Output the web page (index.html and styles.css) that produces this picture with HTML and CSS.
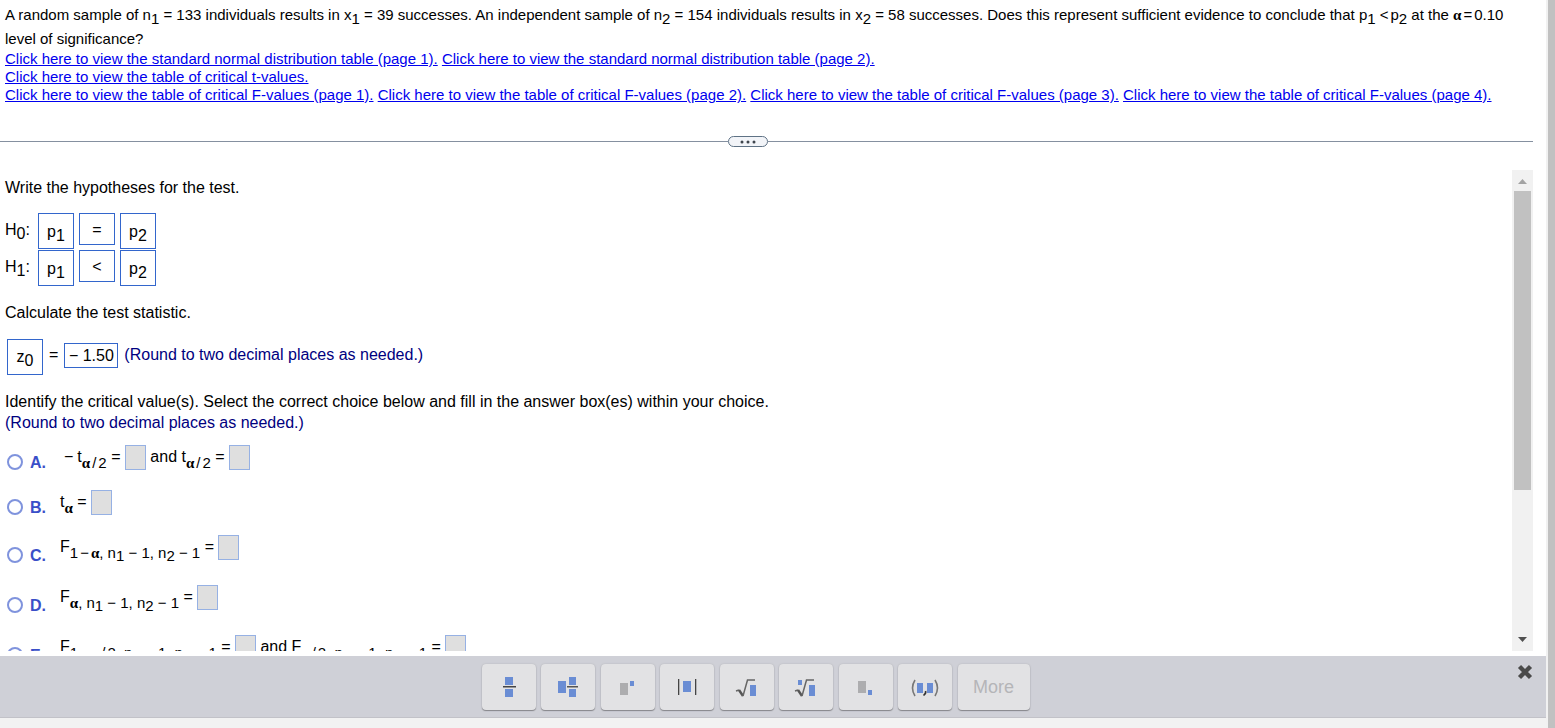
FILE: index.html
```
<!DOCTYPE html>
<html lang="en">
<head>
    <meta charset="UTF-8">
    <meta name="viewport" content="width=device-width, initial-scale=1.0">
    <title>Hypothesis test</title>
    <link rel="stylesheet" href="styles.css">
</head>
<body>
    <div class="page">
        <section class="prompt">
            <p class="problem">A random sample of n<sub>1</sub> = 133 individuals results in x<sub>1</sub> = 39 successes. An independent sample of n<sub>2</sub> = 154 individuals results in x<sub>2</sub> = 58 successes. Does this represent sufficient evidence to conclude that p<sub>1</sub> &lt;<span class="thin"></span>p<sub>2</sub> at the <i class="greek">α</i><span class="thin"></span>=<span class="thin"></span>0.10 level of significance?</p>
            <p class="links"><a href="#">Click here to view the standard normal distribution table (page 1).</a> <a href="#">Click here to view the standard normal distribution table (page 2).</a></p>
            <p class="links"><a href="#">Click here to view the table of critical t-values.</a></p>
            <p class="links"><a href="#">Click here to view the table of critical F-values (page 1).</a> <a href="#">Click here to view the table of critical F-values (page 2).</a> <a href="#">Click here to view the table of critical F-values (page 3).</a> <a href="#">Click here to view the table of critical F-values (page 4).</a></p>
        </section>

        <div class="divider">
            <button type="button" class="divider-handle" aria-label="Resize">
                <svg width="16" height="4" viewBox="0 0 16 4" fill="#3f454d"><circle cx="2" cy="2" r="1.5"/><circle cx="8" cy="2" r="1.5"/><circle cx="14" cy="2" r="1.5"/></svg>
            </button>
        </div>

        <div class="work">
            <main class="question">
                <p>Write the hypotheses for the test.</p>

                <div class="hypotheses">
                    <div class="hypothesis">
                        <span class="hyp-name">H<sub>0</sub>:</span>
                        <button type="button" class="answer">p<sub>1</sub></button>
                        <button type="button" class="answer answer-sign">=</button>
                        <button type="button" class="answer">p<sub>2</sub></button>
                    </div>
                    <div class="hypothesis">
                        <span class="hyp-name">H<sub>1</sub>:</span>
                        <button type="button" class="answer">p<sub>1</sub></button>
                        <button type="button" class="answer answer-sign">&lt;</button>
                        <button type="button" class="answer">p<sub>2</sub></button>
                    </div>
                </div>

                <p>Calculate the test statistic.</p>

                <div class="statistic">
                    <button type="button" class="answer">z<sub>0</sub></button>
                    <label for="stat">=</label>
                    <input type="text" id="stat" class="stat-value" value="− 1.50">
                    <span class="hint">(Round to two decimal places as needed.)</span>
                </div>

                <p>Identify the critical value(s). Select the correct choice below and fill in the answer box(es) within your choice.<br><span class="hint">(Round to two decimal places as needed.)</span></p>

                <div class="choices">
                    <div class="choice">
                        <input type="radio" name="choice" id="choice-a">
                        <label for="choice-a">A.</label>
                        <div class="formula"><span class="thin"></span><span class="thin"></span>−<span class="thin"></span><span class="thin"></span>t<sub><i class="greek">α</i><span class="thin"></span>/<span class="thin"></span>2</sub> = <input type="text" class="blank" aria-label="Lower critical t"> and t<sub><i class="greek">α</i><span class="thin"></span>/<span class="thin"></span>2</sub> = <input type="text" class="blank" aria-label="Upper critical t"></div>
                    </div>
                    <div class="choice">
                        <input type="radio" name="choice" id="choice-b">
                        <label for="choice-b">B.</label>
                        <div class="formula">t<sub><i class="greek">α</i></sub> = <input type="text" class="blank" aria-label="Critical t"></div>
                    </div>
                    <div class="choice choice-deep">
                        <input type="radio" name="choice" id="choice-c">
                        <label for="choice-c">C.</label>
                        <div class="formula">F<sub>1<span class="thin"></span>−<span class="thin"></span><i class="greek">α</i>, n<sub>1</sub> − 1, n<sub>2</sub> − 1</sub> = <input type="text" class="blank" aria-label="Lower critical F"></div>
                    </div>
                    <div class="choice choice-deep">
                        <input type="radio" name="choice" id="choice-d">
                        <label for="choice-d">D.</label>
                        <div class="formula">F<sub><i class="greek">α</i>, n<sub>1</sub> − 1, n<sub>2</sub> − 1</sub> = <input type="text" class="blank" aria-label="Upper critical F"></div>
                    </div>
                    <div class="choice choice-deep">
                        <input type="radio" name="choice" id="choice-e">
                        <label for="choice-e">E.</label>
                        <div class="formula">F<sub>1<span class="thin"></span>−<span class="thin"></span><i class="greek">α</i><span class="thin"></span>/<span class="thin"></span>2, n<sub>1</sub> − 1, n<sub>2</sub> − 1</sub> = <input type="text" class="blank" aria-label="Lower two-tailed F"> and F<sub><i class="greek">α</i><span class="thin"></span>/<span class="thin"></span>2, n<sub>1</sub> − 1, n<sub>2</sub> − 1</sub> = <input type="text" class="blank" aria-label="Upper two-tailed F"></div>
                    </div>
                </div>
            </main>

            <div class="scrollbar">
                <svg width="9" height="5" viewBox="0 0 9 5"><path d="M0 5L4.5 0L9 5Z" fill="#a3a3a3"/></svg>
                <div class="scrollbar-track"><div class="scrollbar-thumb"></div></div>
                <svg width="9" height="5" viewBox="0 0 9 5"><path d="M0 0L4.5 5L9 0Z" fill="#505050"/></svg>
            </div>
        </div>

        <div class="palette">
            <div class="keys-area">
                <div class="keys">
                    <button type="button" class="key" aria-label="Fraction">
                        <svg width="32" height="28" viewBox="0 0 32 28"><path d="M12 4h8v8h-8zM12 16h8v8h-8z" fill="#6a8dd4"/><path d="M10 13h13v1.5H10z" fill="#444"/></svg>
                    </button>
                    <button type="button" class="key" aria-label="Mixed number">
                        <svg width="32" height="28" viewBox="0 0 32 28"><path d="M6 8h8v12H6zM17 4h7v8h-7zM17 16h7v8h-7z" fill="#6a8dd4"/><path d="M15 13h11v1.5H15z" fill="#555"/></svg>
                    </button>
                    <button type="button" class="key" aria-label="Exponent">
                        <svg width="32" height="28" viewBox="0 0 32 28"><path d="M8 10h8v12H8z" fill="#adadaf"/><path d="M18 8h4v5h-4z" fill="#6a8dd4"/></svg>
                    </button>
                    <button type="button" class="key" aria-label="Absolute value">
                        <svg width="32" height="28" viewBox="0 0 32 28"><path d="M12 8h8v11h-8z" fill="#6a8dd4"/><path d="M7 6h1.3v16H7zM24 6h1.3v16H24z" fill="#444"/></svg>
                    </button>
                    <button type="button" class="key" aria-label="Square root">
                        <svg width="32" height="28" viewBox="0 0 32 28"><path d="M19 12h6v11h-6z" fill="#6a8dd4"/><path d="M5 18l3-1" stroke="#666" stroke-width="1.4" fill="none"/><path d="M8 17l4 6" stroke="#555" stroke-width="2.4" fill="none"/><path d="M12 23l4.5-16H24" stroke="#666" stroke-width="1.5" fill="none"/></svg>
                    </button>
                    <button type="button" class="key" aria-label="Nth root">
                        <svg width="32" height="28" viewBox="0 0 32 28"><path d="M19 12h6v11h-6zM8 7h4v5H8z" fill="#6a8dd4"/><path d="M5 18l3-1" stroke="#666" stroke-width="1.4" fill="none"/><path d="M8 17l4 6" stroke="#555" stroke-width="2.4" fill="none"/><path d="M12 23l4.5-16H24" stroke="#666" stroke-width="1.5" fill="none"/></svg>
                    </button>
                    <button type="button" class="key" aria-label="Subscript">
                        <svg width="32" height="28" viewBox="0 0 32 28"><path d="M8 8h8v12H8z" fill="#adadaf"/><path d="M18 17h4v5h-4z" fill="#6a8dd4"/></svg>
                    </button>
                    <button type="button" class="key" aria-label="Ordered pair">
                        <svg width="32" height="28" viewBox="0 0 32 28"><path d="M8 10h6v10H8zM18 10h6v10h-6z" fill="#6a8dd4"/><path d="M6 7q-5 8 0 16M26 7q5 8 0 16" stroke="#777" stroke-width="1.6" fill="none"/><path d="M16.5 18q1 2-2 4.500" stroke="#333" stroke-width="1.6" fill="none"/></svg>
                    </button>
                    <button type="button" class="key key-more" disabled>More</button>
                </div>
            </div>
            <button type="button" class="close" aria-label="Close">
                <svg width="16" height="16" viewBox="0 0 16 16"><path d="M2.500 2.500l11 11M13.500 2.500l-11 11" stroke="#4a4a4a" stroke-width="4.400"/></svg>
            </button>
        </div>
        <div class="footer"></div>
    </div>
    <div class="page-scroll"></div>
</body>
</html>
```
FILE: styles.css
```
* {
    box-sizing: border-box;
    margin: 0;
    padding: 0;
}
body {
    display: flex;
    height: 100vh;
    overflow: hidden;
    font-family: "Liberation Sans", Arial, sans-serif;
    font-size: 16px;
    line-height: 21px;
    color: #000;
    background: #fff;
}
button,
input {
    font: inherit;
    color: inherit;
}
.page {
    flex: 1;
    min-width: 0;
    display: flex;
    flex-direction: column;
}
.page-scroll {
    width: 9px;
    background: #c1c1c1;
    border-left: 2px solid #f1f1f1;
}

/* math */
sub {
    font-size: 16px;
    line-height: 0;
    vertical-align: -4px;
}
.greek {
    font-family: "Liberation Serif", serif;
    font-style: normal;
    font-weight: bold;
}
.thin {
    display: inline-block;
    width: 2px;
}

/* problem text */
.prompt {
    padding: 3px 20px 0 5px;
    font-size: 15px;
}
.prompt sub {
    font-size: 15px;
}
.problem {
    line-height: 23px;
}
.links {
    line-height: 18px;
}
.links a {
    color: #0000ee;
}

.divider {
    display: flex;
    align-items: center;
    margin: 32px 13px 0 0;
}
.divider::before,
.divider::after {
    content: "";
    flex: 20;
    height: 1px;
    background: #8590a0;
}
.divider::after {
    flex: 21;
}
.divider-handle {
    display: flex;
    align-items: center;
    justify-content: center;
    width: 40px;
    height: 11px;
    border: 1px solid #5f7285;
    border-radius: 6px;
    background: #f2f4f8;
}

/* question */
.work {
    flex: 1;
    min-height: 0;
    display: flex;
    margin: 23px 13px 5px 0;
    overflow: hidden;
}
.question {
    flex: 1;
    padding: 7px 5px 0;
}
.hint {
    color: #000080;
}
.answer {
    width: 36px;
    height: 36px;
    border: 1px solid #3366cc;
    background: #fff;
}
.answer-sign {
    height: 32px;
}
.hypotheses {
    display: flex;
    flex-direction: column;
    gap: 1px;
    padding: 15px 0 16px;
}
.hypothesis {
    display: flex;
    align-items: flex-start;
    gap: 5px;
}
.hyp-name {
    width: 28px;
    padding-top: 6px;
}
.statistic {
    display: flex;
    align-items: flex-start;
    gap: 6px;
    padding: 16px 2px;
    line-height: 32px;
}
.stat-value {
    width: 54px;
    height: 25px;
    margin-top: 4px;
    border: 1px solid #3366cc;
    text-align: center;
}
.choices {
    padding-top: 11px;
}
.choice {
    display: flex;
    align-items: center;
    min-height: 36px;
    margin-bottom: 9px;
    padding-left: 2px;
}
.choice-deep {
    min-height: 42px;
    margin-bottom: 8px;
}
.choice label {
    width: 30px;
    margin-left: 7px;
    font-weight: bold;
    color: #3a4fc8;
}
.choice input[type="radio"] {
    appearance: none;
    width: 16px;
    height: 16px;
    border: 2px solid #7f93dd;
    border-radius: 50%;
    background: #fff;
}
.formula {
    align-self: flex-start;
    line-height: 25px;
    white-space: nowrap;
}
.formula sub {
    font-size: 15px;
    vertical-align: -6px;
}
.formula sub sub {
    vertical-align: -3px;
}
.blank {
    width: 21px;
    height: 25px;
    border: 1px solid #96b1e4;
    background: #dfdfdf;
    vertical-align: middle;
}

.scrollbar {
    display: flex;
    flex-direction: column;
    align-items: center;
    width: 21px;
    padding: 9px 0;
    background: #f1f1f1;
}
.scrollbar-track {
    flex: 1;
    width: 17px;
    padding: 7px 0;
}
.scrollbar-thumb {
    height: 68%;
    background: #c1c1c1;
}

/* math palette */
.palette {
    display: flex;
    align-items: flex-start;
    padding: 8px 13px 7px 0;
    background: #cfd0d7;
    border-bottom: 1px solid #c2c2c8;
}
.keys-area {
    flex: 1;
    display: flex;
    justify-content: center;
}
.keys {
    display: flex;
    justify-content: space-between;
    width: 548px;
}
.key {
    display: flex;
    align-items: center;
    justify-content: center;
    width: 54px;
    height: 46px;
    border: 0;
    border-radius: 4px;
    background: #e2e2e4;
    box-shadow: 0 1px 1px #85858a, 0 0 2px #b4b4ba;
}
.key-more {
    width: 72px;
    font-size: 18px;
    color: #b5b5b8;
}
.close {
    display: flex;
    padding-left: 6px;
    border: 0;
    background: none;
}
.footer {
    height: 10px;
    background: #f2f2f2;
}
```
